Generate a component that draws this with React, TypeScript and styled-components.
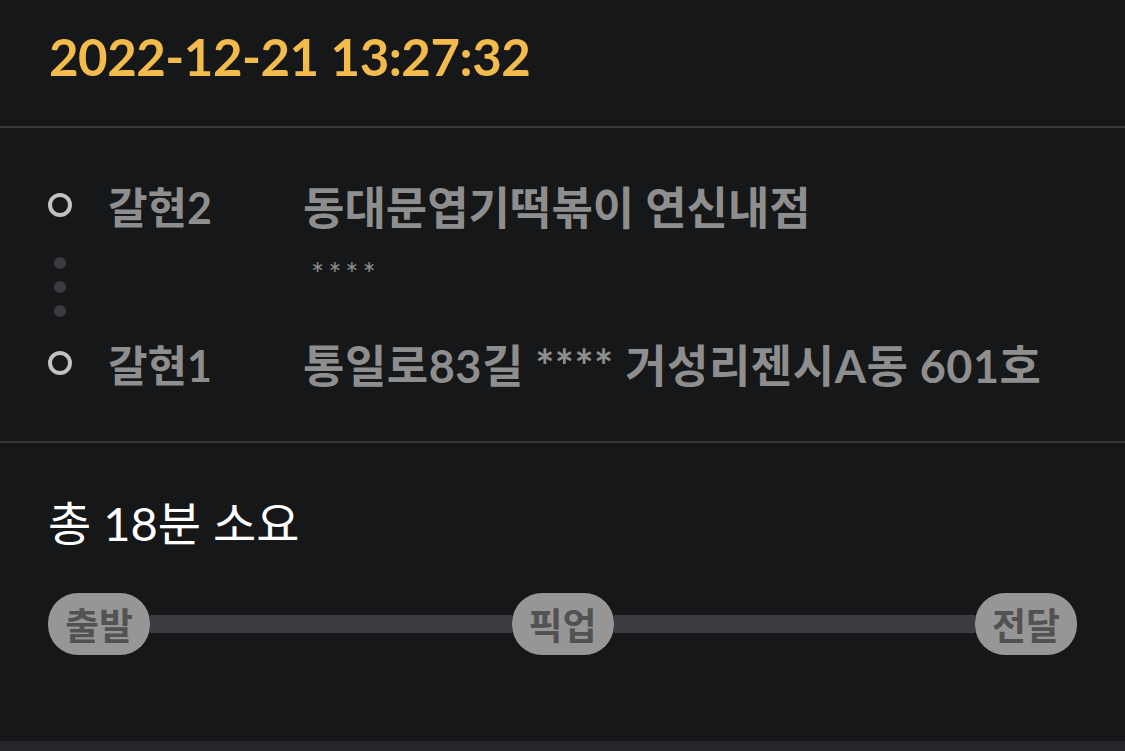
import styled, { createGlobalStyle } from "styled-components";

const Global = createGlobalStyle`
  html, body {
    margin: 0;
    padding: 0;
    background-color: #161719;
  }
  body {
    font-family: Lato, "Noto Sans CJK KR", sans-serif;
  }
`;

const Page = styled.div`
  width: 1125px;
  height: 751px;
  display: flex;
  flex-direction: column;
  background-color: #161719;
  overflow: hidden;
`;

const Header = styled.div`
  height: 128px;
  display: flex;
  align-items: center;
  padding: 0 49px;
  border-bottom: 2px solid #38383b;
  box-sizing: border-box;
`;

const DateText = styled.div`
  color: #f2bb4b;
  font-size: 51px;
  font-weight: 700;
  letter-spacing: -0.5px;
  margin-top: -14px;
`;

const Route = styled.div`
  padding: 49px 48px 50px 48px;
  border-bottom: 2px solid #38383b;
`;

const StopRow = styled.div`
  display: flex;
  align-items: center;
  height: 56px;
`;

const Marker = styled.div`
  width: 24px;
  height: 24px;
  border: 4px solid #c2c2c2;
  border-radius: 50%;
  box-sizing: border-box;
  margin-right: 36px;
  flex-shrink: 0;
`;

const StopLabel = styled.div`
  width: 195px;
  color: #8e8e8e;
  font-size: 43px;
  font-weight: 700;
`;

const Address = styled.div<{ $spacing?: number }>`
  color: #8e8e8e;
  font-size: 45px;
  font-weight: 700;
  white-space: nowrap;
  letter-spacing: ${(p) => p.$spacing ?? 0}px;
`;

const Between = styled.div`
  display: flex;
  height: 102px;
`;

const Dots = styled.div`
  width: 24px;
  display: flex;
  flex-direction: column;
  align-items: center;
  gap: 12px;
  padding-top: 24px;
  margin-right: 36px;
`;

const Dot = styled.span`
  width: 12px;
  height: 12px;
  border-radius: 50%;
  background-color: #3c3c40;
`;

const Detail = styled.div`
  margin-left: 195px;
  padding-top: 25px;
  padding-left: 8px;
  color: #8e8e8e;
  font-size: 31px;
  line-height: 30px;
  letter-spacing: 4px;
`;

const Summary = styled.div`
  flex: 1;
  padding: 56px 48px 0 48px;
`;

const Total = styled.div`
  color: #ffffff;
  font-size: 47px;
  line-height: 48px;
`;

const Timeline = styled.div`
  display: flex;
  align-items: center;
  margin-top: 46px;
`;

const Pill = styled.div`
  width: 102px;
  height: 62px;
  border-radius: 30px;
  background-color: #969696;
  color: #525252;
  font-size: 37px;
  font-weight: 700;
  display: flex;
  align-items: center;
  justify-content: center;
  flex-shrink: 0;
`;

const Track = styled.div`
  flex: 1;
  height: 18px;
  background-color: #3d3c41;
`;

const BottomBar = styled.div`
  height: 10px;
  background-color: #26262a;
`;

export default function App() {
  return (
    <>
      <Global />
      <Page>
        <Header>
          <DateText>2022-12-21 13:27:32</DateText>
        </Header>
        <Route>
          <StopRow>
            <Marker />
            <StopLabel>갈현2</StopLabel>
            <Address>동대문엽기떡볶이 연신내점</Address>
          </StopRow>
          <Between>
            <Dots>
              <Dot />
              <Dot />
              <Dot />
            </Dots>
            <Detail>****</Detail>
          </Between>
          <StopRow>
            <Marker />
            <StopLabel>갈현1</StopLabel>
            <Address $spacing={0.5}>통일로83길 **** 거성리젠시A동 601호</Address>
          </StopRow>
        </Route>
        <Summary>
          <Total>총 18분 소요</Total>
          <Timeline>
            <Pill>출발</Pill>
            <Track />
            <Pill>픽업</Pill>
            <Track />
            <Pill>전달</Pill>
          </Timeline>
        </Summary>
        <BottomBar />
      </Page>
    </>
  );
}
